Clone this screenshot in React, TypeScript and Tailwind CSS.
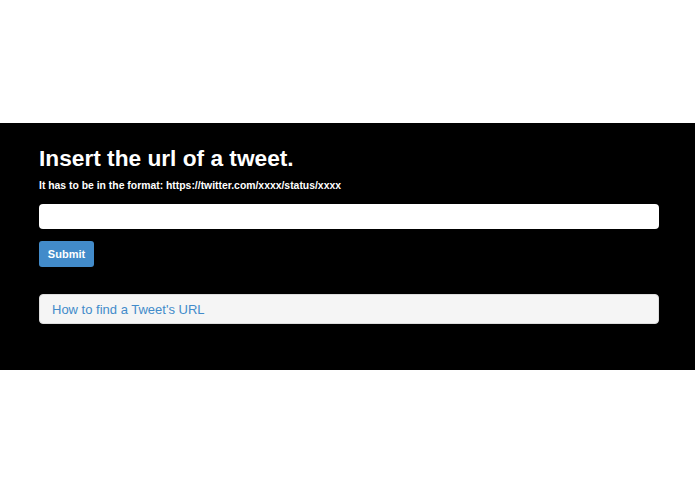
export default function App() {
  return (
    <div className="flex h-[494px] w-full flex-col bg-white font-['Liberation_Sans',Arial,sans-serif]">
      <div className="h-[123px] shrink-0" />
      <section className="flex h-[247px] shrink-0 flex-col bg-black pt-[22px] pr-[36px] pl-[39px]">
        <h1 className="text-[22.7px] leading-[26px] font-bold text-white">Insert the url of a tweet.</h1>
        <label className="mt-[8px] text-[10.4px] leading-[14px] font-bold text-white">
          It has to be in the format: https://twitter.com/xxxx/status/xxxx
        </label>
        <input type="text" className="mt-[11px] h-[25px] w-full rounded-[4px] bg-white px-2 text-[12px] outline-none" />
        <div className="mt-[12px]">
          <button
            type="button"
            className="h-[26px] w-[55px] rounded-[3px] bg-[#428bca] text-[11px] font-bold text-white"
          >
            Submit
          </button>
        </div>
        <div className="mt-[27px] flex h-[30px] items-center rounded-[4px] border border-[#dddddd] bg-[#f5f5f5] px-[12px]">
          <a className="text-[13px] text-[#428bca]">How to find a Tweet's URL</a>
        </div>
      </section>
      <div className="flex-1" />
    </div>
  );
}
